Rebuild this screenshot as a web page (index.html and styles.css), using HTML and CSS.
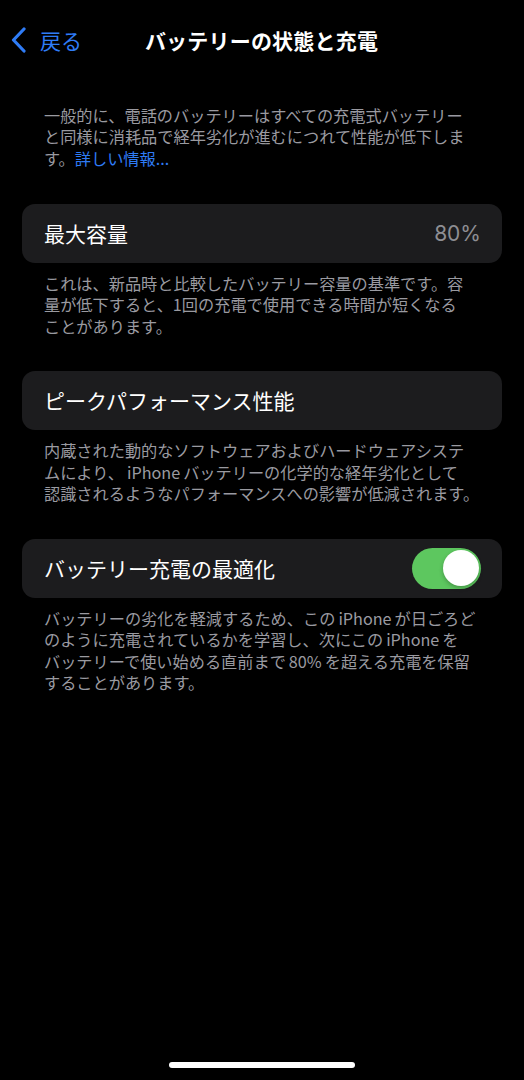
FILE: index.html
```html
<!DOCTYPE html>
<html lang="ja">
<head>
<meta charset="utf-8">
<title>バッテリーの状態と充電</title>
<link rel="stylesheet" href="styles.css">
</head>
<body>
<div class="screen">
  <header class="nav">
    <a class="back">
      <svg class="chev" width="18" height="26" viewBox="0 0 18 26"><path d="M14 2 L3.5 13 L14 24" fill="none" stroke="#2f7cf6" stroke-width="3.2" stroke-linecap="round" stroke-linejoin="round"/></svg>
      <span>戻る</span>
    </a>
    <h1 class="title">バッテリーの状態と充電</h1>
    <span></span>
  </header>

  <p class="desc">一般的に、電話のバッテリーはすべての充電式バッテリー<br>と同様に消耗品で経年劣化が進むにつれて性能が低下しま<br>す。<span class="link">詳しい情報...</span></p>

  <section class="group">
    <div class="card">
      <span class="label">最大容量</span>
      <span class="value">80%</span>
    </div>
    <p class="foot">これは、新品時と比較したバッテリー容量の基準です。容<br>量が低下すると、1回の充電で使用できる時間が短くなる<br>ことがあります。</p>
  </section>

  <section class="group">
    <div class="card">
      <span class="label">ピークパフォーマンス性能</span>
    </div>
    <p class="foot">内蔵された動的なソフトウェアおよびハードウェアシステ<br>ムにより、<span class="lat">iPhone</span>バッテリーの化学的な経年劣化として<br>認識されるようなパフォーマンスへの影響が低減されます。</p>
  </section>

  <section class="group">
    <div class="card">
      <span class="label">バッテリー充電の最適化</span>
      <span class="toggle"><span class="knob"></span></span>
    </div>
    <p class="foot">バッテリーの劣化を軽減するため、この<span class="lat">iPhone</span>が日ごろど<br>のように充電されているかを学習し、次にこの<span class="lat">iPhone</span>を<br>バッテリーで使い始める直前まで<span class="lat">80%</span>を超える充電を保留<br>することがあります。</p>
  </section>

  <div class="home"></div>
</div>
</body>
</html>
```

FILE: styles.css
```css
* { box-sizing: border-box; }
html, body {
  margin: 0;
  padding: 0;
  background: #000;
}
body {
  font-family: "Noto Sans CJK JP", "Noto Sans", sans-serif;
  color: #fff;
}
.screen {
  position: relative;
  width: 524px;
  height: 1080px;
  background: #000;
  overflow: hidden;
}
.nav {
  height: 80px;
  display: grid;
  grid-template-columns: 1fr auto 1fr;
  align-items: center;
}
.back {
  display: flex;
  align-items: center;
  gap: 12px;
  margin-left: 10px;
  color: #2f7cf6;
  font-size: 21px;
  line-height: 1;
}
.chev { display: block; }
.title {
  margin: 0 0 0 -1px;
  font-size: 21px;
  font-weight: 700;
  letter-spacing: 0.2px;
  line-height: 1;
}
.desc {
  margin: 25px 0 0 44px;
  font-size: 16.2px;
  line-height: 21.3px;
  color: #9a9aa0;
  white-space: nowrap;
}
.link { color: #2f7cf6; }
.lat { margin: 0 3px; }
.group {
  margin-top: 35px;
}
.group + .group { margin-top: 34px; }
.card {
  margin: 0 22px;
  height: 59px;
  border-radius: 13px;
  background: #1c1c1e;
  display: flex;
  align-items: center;
  justify-content: space-between;
  padding: 0 21px 0 22px;
}
.label {
  font-size: 21px;
  line-height: 1;
  color: #fff;
}
.value {
  font-family: Inter, "Noto Sans", sans-serif;
  font-size: 21px;
  color: #8e8e93;
  line-height: 1;
}
.toggle {
  width: 69px;
  height: 41px;
  border-radius: 21px;
  background: #5dc75f;
  display: flex;
  align-items: center;
  justify-content: flex-end;
  padding: 0 2.5px;
}
.knob {
  width: 36px;
  height: 36px;
  border-radius: 50%;
  background: #fff;
  box-shadow: 0 2px 4px rgba(0,0,0,0.25);
}
.foot {
  margin: 10px 0 0 44px;
  font-size: 16.2px;
  line-height: 21.5px;
  color: #9a9aa0;
  white-space: nowrap;
}
.home {
  position: absolute;
  left: 169px;
  bottom: 12px;
  width: 186px;
  height: 6px;
  border-radius: 3px;
  background: #fff;
}
```
